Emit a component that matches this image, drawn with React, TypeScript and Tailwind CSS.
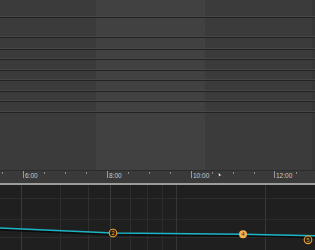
export default function App() {
  const rowHeights = [18, 20, 12, 10, 11, 10, 11, 10, 11];
  const minorTicks = [2, 44, 65, 86, 128, 149, 170, 212, 233, 254, 296];
  const majors = [
    { x: 23, label: "6:00" },
    { x: 107, label: "8:00" },
    { x: 191, label: "10:00" },
    { x: 274, label: "12:00" },
  ];
  const vLines = [
    { x: 21, c: "#3a3a3a" },
    { x: 60, c: "#2e2e2e" },
    { x: 88, c: "#303030" },
    { x: 110, c: "#3a3a3a" },
    { x: 130, c: "#2e2e2e" },
    { x: 147, c: "#2c2c2c" },
    { x: 162, c: "#2c2c2c" },
    { x: 176, c: "#363636" },
    { x: 265, c: "#363636" },
  ];

  return (
    <div className="w-[315px] h-[250px] overflow-hidden flex flex-col bg-[#3b3b3b] font-['Liberation_Sans',sans-serif]">
      {/* Tracks */}
      <div className="h-[170px] flex flex-col bg-[linear-gradient(90deg,#3b3b3b_96px,#414141_96px,#414141_205px,#3b3b3b_205px,#3b3b3b_312px,#363636_312px)]">
        {rowHeights.map((h, i) => (
          <div
            key={i}
            className="shrink-0 border-b border-b-[#232323] shadow-[inset_0_-1px_0_#474747]"
            style={{ height: h }}
          />
        ))}
        <div className="flex-1" />
      </div>

      {/* Ruler */}
      <div className="relative h-[13px] border-t border-t-[#2c2c2c] bg-[#3a3a3a]">
        {minorTicks.map((x) => (
          <div key={x} className="absolute top-[1px] w-px h-[2px] bg-[#8a8a8a]" style={{ left: x }} />
        ))}
        {majors.map((m) => (
          <div key={m.x} className="absolute top-0 flex items-start" style={{ left: m.x }}>
            <div className="w-px h-[7px] bg-[#9a9a9a]" />
            <span className="ml-[1px] mt-[2px] text-[6.5px] leading-none text-[#c8c8c8]">{m.label}</span>
          </div>
        ))}
        <svg className="absolute left-[218px] top-[1px]" width="5" height="6" viewBox="0 0 5 6">
          <path d="M0.5 0.5 L0.5 5 L1.8 3.8 L3.8 3.8 Z" fill="#ffffff" stroke="#222" strokeWidth="0.5" />
        </svg>
      </div>

      <div className="h-[2px] bg-[#9c9c9c]" />

      {/* Curve editor */}
      <div className="flex-1 bg-[#1f1f1f]">
        <svg width="315" height="65" viewBox="0 185 315 65" className="block">
          {[198, 219, 237].map((y) => (
            <line key={y} x1="0" x2="315" y1={y + 0.5} y2={y + 0.5} stroke="#2c2c2c" />
          ))}
          {vLines.map((v) => (
            <line key={v.x} x1={v.x + 0.5} x2={v.x + 0.5} y1="185" y2="250" stroke={v.c} />
          ))}
          <polyline points="0,229.8 113,234.8 243,236 315,237.6" fill="none" stroke="#0b0b0b" strokeWidth="1.5" />
          <polyline points="0,228 113,233 243,234.3 315,235.8" fill="none" stroke="#1bb3c6" strokeWidth="1.6" />
          <circle cx="113" cy="233" r="3.8" fill="#2a2012" stroke="#f0a030" strokeWidth="1.1" />
          <circle cx="243" cy="234.3" r="4" fill="#f3b04c" />
          <circle cx="308" cy="239.8" r="3.8" fill="#2a2012" stroke="#f0a030" strokeWidth="1.1" />
          <text x="113" y="235" fontSize="5.5" textAnchor="middle" fill="#f0a030" fontFamily="Liberation Sans">2</text>
          <text x="243" y="236.3" fontSize="5.5" textAnchor="middle" fill="#3a2a10" fontFamily="Liberation Sans">4</text>
          <text x="308" y="241.8" fontSize="5.5" textAnchor="middle" fill="#f0a030" fontFamily="Liberation Sans">5</text>
        </svg>
      </div>
    </div>
  );
}
